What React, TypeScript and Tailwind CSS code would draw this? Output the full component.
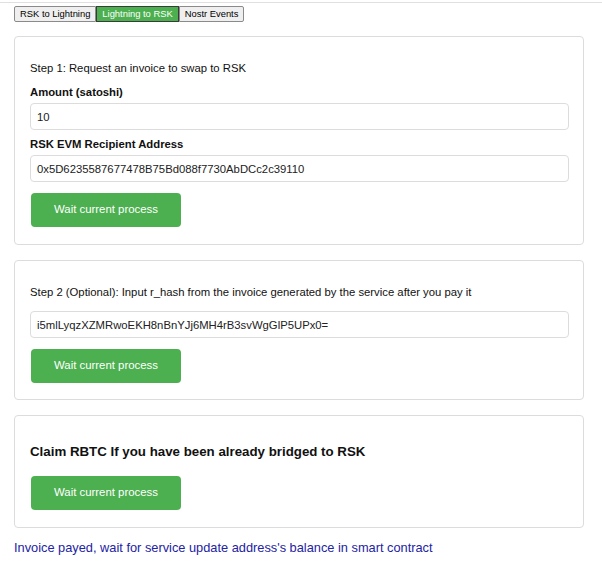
import React from "react";

const font = { fontFamily: '"Liberation Sans", Arial, sans-serif' };

function GreenButton() {
  return (
    <button className="block w-[150px] h-[34px] rounded-[4px] bg-[#4caf50] text-white text-[11.4px] ml-px">
      Wait current process
    </button>
  );
}

function Input({ value }: { value: string }) {
  return (
    <input
      readOnly
      value={value}
      className="block w-full h-[27px] border border-[#dcdcdc] rounded-[4px] px-[6px] text-[11.3px] text-[#222] bg-white outline-none"
    />
  );
}

export default function App() {
  return (
    <div className="bg-white min-h-[573px] text-[#111]" style={font}>
      <div className="h-[2px]" />
      <div className="h-px bg-[#e0e0e0]" />
      <div className="px-[14px]">
        <div className="flex mt-[3px] text-[9.4px] leading-none">
          <button className="h-[16px] px-[5px] border border-[#8a8a8a] bg-[#efefef] text-black rounded-l-[2px]">
            RSK to Lightning
          </button>
          <button className="h-[16px] px-[5px] border border-[#3a3a3a] bg-[#4caf50] text-white">
            Lightning to RSK
          </button>
          <button className="h-[16px] px-[5px] border border-[#8a8a8a] bg-[#efefef] text-black rounded-r-[2px]">
            Nostr Events
          </button>
        </div>

        <div className="w-[570px] mt-[14px] border border-[#dcdcdc] rounded-[4px] pl-[15px] pr-[14px] pt-[24px] pb-[17px]">
          <p className="text-[11.3px] leading-[14px]">Step 1: Request an invoice to swap to RSK</p>
          <p className="text-[11.3px] font-bold leading-[14px] mt-[10px]">Amount (satoshi)</p>
          <div className="mt-[4px]">
            <Input value="10" />
          </div>
          <p className="text-[11.3px] font-bold leading-[14px] mt-[7px]">RSK EVM Recipient Address</p>
          <div className="mt-[4px]">
            <Input value="0x5D6235587677478B75Bd088f7730AbDCc2c39110" />
          </div>
          <div className="mt-[11px]">
            <GreenButton />
          </div>
        </div>

        <div className="w-[570px] mt-[15px] border border-[#dcdcdc] rounded-[4px] pl-[15px] pr-[14px] pt-[24px] pb-[16px]">
          <p className="text-[11.3px] leading-[14px]">
            Step 2 (Optional): Input r_hash from the invoice generated by the service after you pay it
          </p>
          <div className="mt-[12px]">
            <Input value="i5mlLyqzXZMRwoEKH8nBnYJj6MH4rB3svWgGlP5UPx0=" />
          </div>
          <div className="mt-[11px]">
            <GreenButton />
          </div>
        </div>

        <div className="w-[570px] mt-[15px] border border-[#dcdcdc] rounded-[4px] pl-[15px] pr-[14px] pt-[28px] pb-[17px]">
          <p className="text-[13.3px] font-bold leading-[16px]">Claim RBTC If you have been already bridged to RSK</p>
          <div className="mt-[16px]">
            <GreenButton />
          </div>
        </div>

        <p className="mt-[12px] text-[12.8px] leading-[16px] text-[#2323a3]">
          Invoice payed, wait for service update address's balance in smart contract
        </p>
      </div>
    </div>
  );
}
